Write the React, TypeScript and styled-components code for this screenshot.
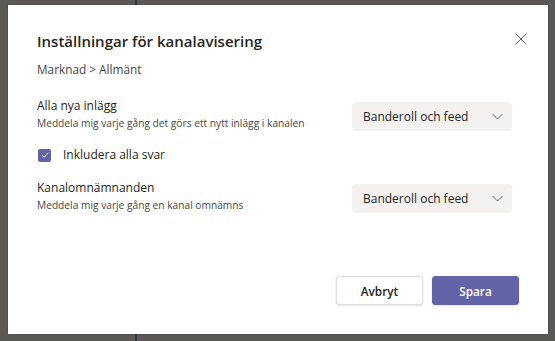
import React from 'react'
import styled, { createGlobalStyle } from 'styled-components'

const GlobalStyle = createGlobalStyle`
  html, body {
    margin: 0;
    padding: 0;
    background: #5a5956;
  }
  body {
    font-family: "Segoe UI", "Open Sans", sans-serif;
    color: #252423;
  }
`

const Backdrop = styled.div`
  width: 555px;
  height: 341px;
  background:
    linear-gradient(90deg, transparent 135px, #34344a 135px, #34344a 137px, transparent 137px),
    #5a5956;
  padding: 5px 0 0 8px;
  box-sizing: border-box;
  overflow: hidden;
`

const Dialog = styled.div`
  width: 540px;
  height: 329px;
  background: #ffffff;
  box-sizing: border-box;
  padding: 24px 29px 29px 29px;
  display: flex;
  flex-direction: column;
  box-shadow: 0 0 2px rgba(0, 0, 0, 0.2);
`

const Header = styled.div`
  display: flex;
  justify-content: space-between;
  align-items: flex-start;
`

const Title = styled.h1`
  margin: 0;
  font-size: 15px;
  line-height: 24px;
  font-weight: 600;
  color: #252423;
`

const CloseButton = styled.button`
  border: none;
  background: none;
  padding: 0;
  margin: 0 -12px 0 0;
  width: 20px;
  height: 20px;
  display: flex;
  align-items: center;
  justify-content: center;
`

const Crumb = styled.div`
  margin-top: 8px;
  font-size: 11.8px;
  line-height: 16px;
  color: #484644;
`

const Body = styled.div`
  margin-top: 19px;
  padding-right: 7px;
  display: flex;
  flex-direction: column;
`

const SettingRow = styled.div`
  display: flex;
  justify-content: space-between;
  align-items: center;
`

const Labels = styled.div`
  display: flex;
  flex-direction: column;
  padding-bottom: 5px;
`

const Label = styled.div`
  font-size: 12px;
  line-height: 19px;
  color: #252423;
`

const Hint = styled.div`
  font-size: 10.2px;
  line-height: 16px;
  color: #484644;
`

const Select = styled.div`
  width: 160px;
  height: 29px;
  box-sizing: border-box;
  background: #f3f2f1;
  border-radius: 3px;
  display: flex;
  align-items: center;
  justify-content: space-between;
  padding: 0 9px 0 11px;
  font-size: 12px;
  color: #252423;
`

const CheckRow = styled.label`
  display: flex;
  align-items: center;
  gap: 12px;
  margin: 10px 0 14px 1px;
  font-size: 12px;
  line-height: 18px;
  color: #252423;
`

const Box = styled.span`
  width: 13px;
  height: 13px;
  border-radius: 2px;
  background: #6264a7;
  display: flex;
  align-items: center;
  justify-content: center;
`

const Footer = styled.div`
  margin-top: auto;
  display: flex;
  justify-content: flex-end;
  gap: 9px;
`

const Button = styled.button<{ $primary?: boolean }>`
  width: 87px;
  height: 29px;
  border-radius: 3px;
  font-family: inherit;
  font-size: 11.8px;
  font-weight: 600;
  cursor: pointer;
  border: 1px solid ${p => (p.$primary ? '#6264a7' : '#e1dfdd')};
  background: ${p => (p.$primary ? '#6264a7' : '#ffffff')};
  color: ${p => (p.$primary ? '#ffffff' : '#252423')};
  box-shadow: 0 1px 2px rgba(0, 0, 0, 0.12);
`

function Chevron() {
  return (
    <svg width="11" height="7" viewBox="0 0 11 7">
      <path d="M0.5 1 L5.5 6 L10.5 1" fill="none" stroke="#605e5c" strokeWidth="1" />
    </svg>
  )
}

function Setting({ label, hint }: { label: string; hint: string }) {
  return (
    <SettingRow>
      <Labels>
        <Label>{label}</Label>
        <Hint>{hint}</Hint>
      </Labels>
      <Select>
        <span>Banderoll och feed</span>
        <Chevron />
      </Select>
    </SettingRow>
  )
}

export default function App() {
  return (
    <>
      <GlobalStyle />
      <Backdrop>
        <Dialog>
          <Header>
            <Title>Inställningar för kanalavisering</Title>
            <CloseButton aria-label="Stäng">
              <svg width="12" height="12" viewBox="0 0 12 12">
                <path d="M0.5 0.5 L11.5 11.5 M11.5 0.5 L0.5 11.5" stroke="#605e5c" strokeWidth="1" />
              </svg>
            </CloseButton>
          </Header>
          <Crumb>Marknad &gt; Allmänt</Crumb>
          <Body>
            <Setting label="Alla nya inlägg" hint="Meddela mig varje gång det görs ett nytt inlägg i kanalen" />
            <CheckRow>
              <Box>
                <svg width="8" height="8" viewBox="0 0 8 8">
                  <path d="M1 4.2 L3.2 6.2 L7 1.8" fill="none" stroke="#fff" strokeWidth="1" />
                </svg>
              </Box>
              Inkludera alla svar
            </CheckRow>
            <Setting label="Kanalomnämnanden" hint="Meddela mig varje gång en kanal omnämns" />
          </Body>
          <Footer>
            <Button>Avbryt</Button>
            <Button $primary>Spara</Button>
          </Footer>
        </Dialog>
      </Backdrop>
    </>
  )
}
